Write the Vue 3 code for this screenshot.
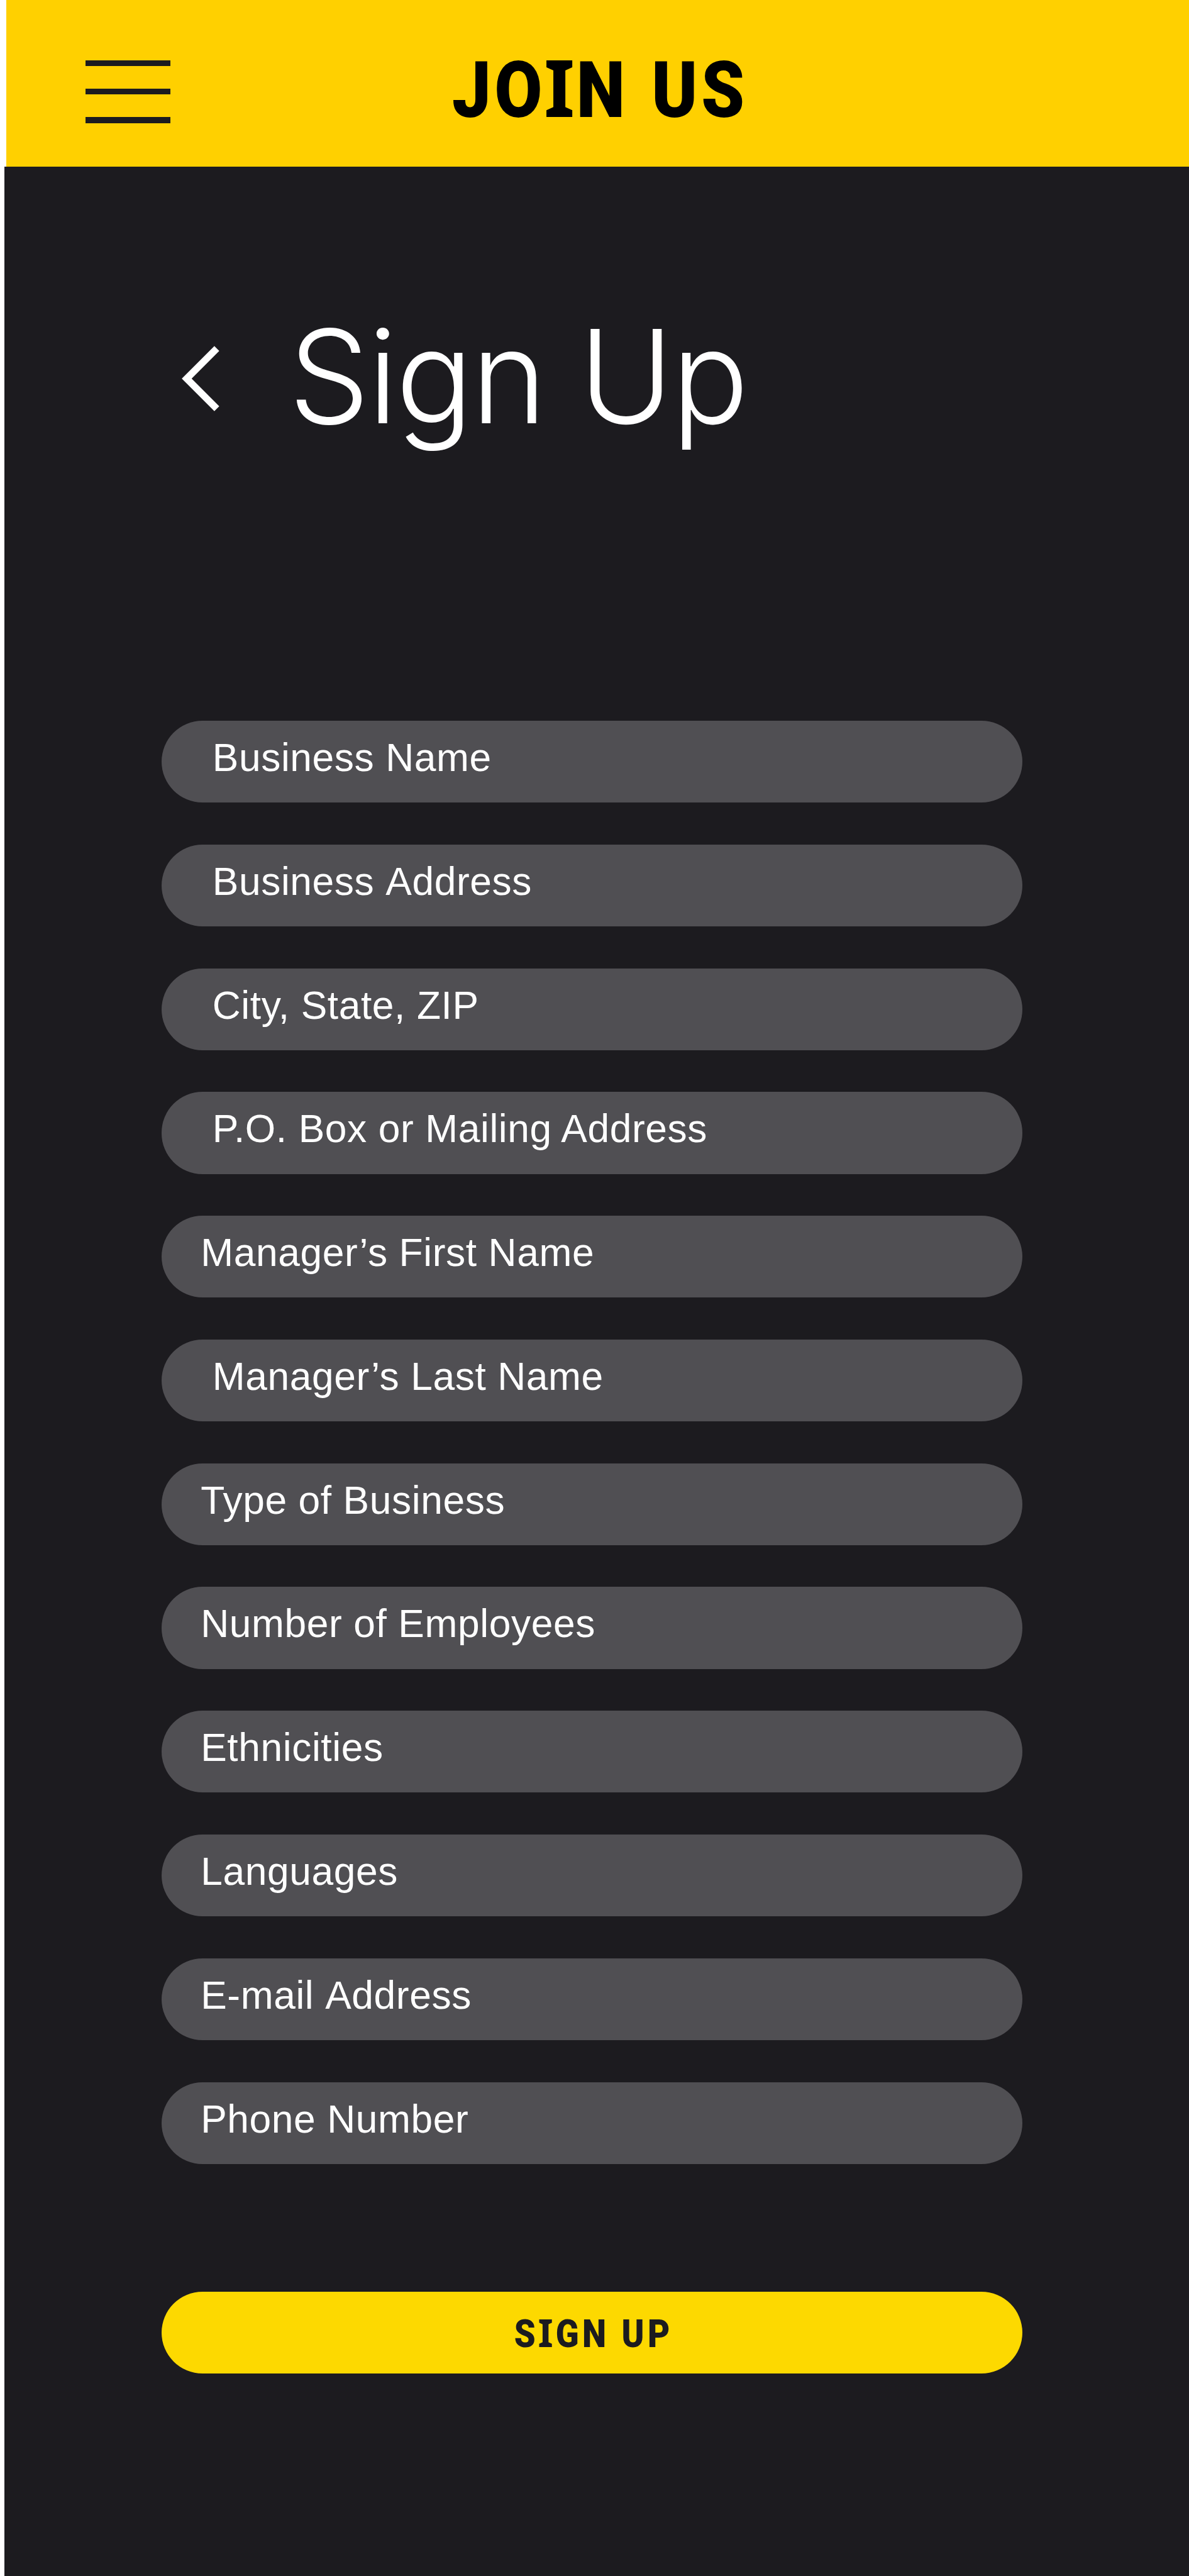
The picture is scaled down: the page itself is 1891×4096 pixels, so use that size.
<template>
  <div class="page">
    <header class="header">
      <button class="menu-button" aria-label="Menu">
        <span class="menu-line"></span>
        <span class="menu-line"></span>
        <span class="menu-line"></span>
      </button>
      <h1 class="header-title">JO<span class="slab">I</span>N US</h1>
    </header>

    <main class="content">
      <div class="heading-row">
        <svg class="back-icon" viewBox="0 0 60 104" fill="none">
          <path d="M55.8 4.1 L7.9 52 L55.8 99.9" stroke="#fff" stroke-width="11" />
        </svg>
        <h2 class="heading">Sign Up</h2>
      </div>

      <form class="form" @submit.prevent>
        <div
          v-for="field in fields"
          :key="field.label"
          class="field"
          :class="{ indented: field.indented, unkerned: field.unkerned }"
        >
          {{ field.label }}
        </div>

        <button class="submit-button">
          <span class="submit-text">S<span class="slab">I</span>GN UP</span>
        </button>
      </form>
    </main>
  </div>
</template>

<script setup>
// --- FIELDS ---
const fields = [
  { label: 'Business Name', indented: true },
  { label: 'Business Address', indented: true, unkerned: true },
  { label: 'City, State, ZIP', indented: true },
  { label: 'P.O. Box or Mailing Address', indented: true },
  { label: 'Manager’s First Name' },
  { label: 'Manager’s Last Name', indented: true },
  { label: 'Type of Business' },
  { label: 'Number of Employees' },
  { label: 'Ethnicities' },
  { label: 'Languages' },
  { label: 'E-mail Address', unkerned: true },
  { label: 'Phone Number' },
]
</script>

<style>
body {
  margin: 0;
  background-color: #fff;
}
</style>

<style scoped>
.page {
  display: flex;
  flex-direction: column;
  height: 4096px;
  overflow: hidden;
}

.header {
  display: flex;
  height: 265px;
  margin-left: 10px;
  background-color: #ffd000;
}

.menu-button {
  display: flex;
  flex-direction: column;
  gap: 36px;
  width: 135.5px;
  margin: 95.6px 0 0 125.5px;
  padding: 0;
  border: none;
  background: none;
}

.menu-line {
  height: 9.4px;
  background-color: #1c1b1f;
}

.header-title {
  margin: 0 0 0 447.5px;
  font-family: Roboto, sans-serif;
  font-size: 125px;
  font-weight: 900;
  line-height: 288px;
  letter-spacing: 6.5px;
  word-spacing: 4px;
  white-space: nowrap;
  color: #000;
  transform: scaleX(0.88);
  transform-origin: left;
}

/* capital I with crossbars */
.slab {
  display: inline-block;
  font-family: 'Noto Sans', sans-serif;
  font-weight: 700;
  line-height: 0;
  transform: scaleX(1.15);
}

.content {
  flex: 1;
  margin-left: 7px;
  padding-left: 250.2px;
  background-color: #1c1b1f;
}

.heading-row {
  display: flex;
  align-items: flex-start;
  height: 881px;
}

.back-icon {
  width: 60px;
  height: 104px;
  margin: 284.9px 0 0 31.6px;
}

.heading {
  margin: 207.7px 0 0 110px;
  font-family: Inter, sans-serif;
  font-size: 206px;
  font-weight: 300;
  line-height: 250px;
  letter-spacing: -3px;
  white-space: nowrap;
  color: #fff;
  transform: scaleX(0.99);
  transform-origin: left;
}

.form {
  display: flex;
  flex-direction: column;
  gap: 66.6px;
  width: 1368.7px;
}

.field {
  box-sizing: border-box;
  height: 130.2px;
  padding-left: 62px;
  border-radius: 65.1px;
  background-color: #504f53;
  font-family: 'Liberation Sans', Arial, sans-serif;
  font-size: 62.3px;
  line-height: 117px;
  letter-spacing: 0.6px;
  white-space: nowrap;
  color: #fff;
}

.field.indented {
  padding-left: 80.6px;
}

.field.unkerned {
  font-kerning: none;
}

.submit-button {
  height: 130.2px;
  margin-top: 136.4px;
  padding: 0;
  border: none;
  border-radius: 65.1px;
  background-color: #fdd900;
  font-family: Roboto, sans-serif;
  font-size: 61.7px;
  font-weight: 900;
  line-height: 134px;
  letter-spacing: 6.1px;
  color: #1c1b1f;
}

.submit-text {
  display: inline-block;
  padding-left: 6px;
  white-space: nowrap;
  transform: scaleX(0.88);
}
</style>
